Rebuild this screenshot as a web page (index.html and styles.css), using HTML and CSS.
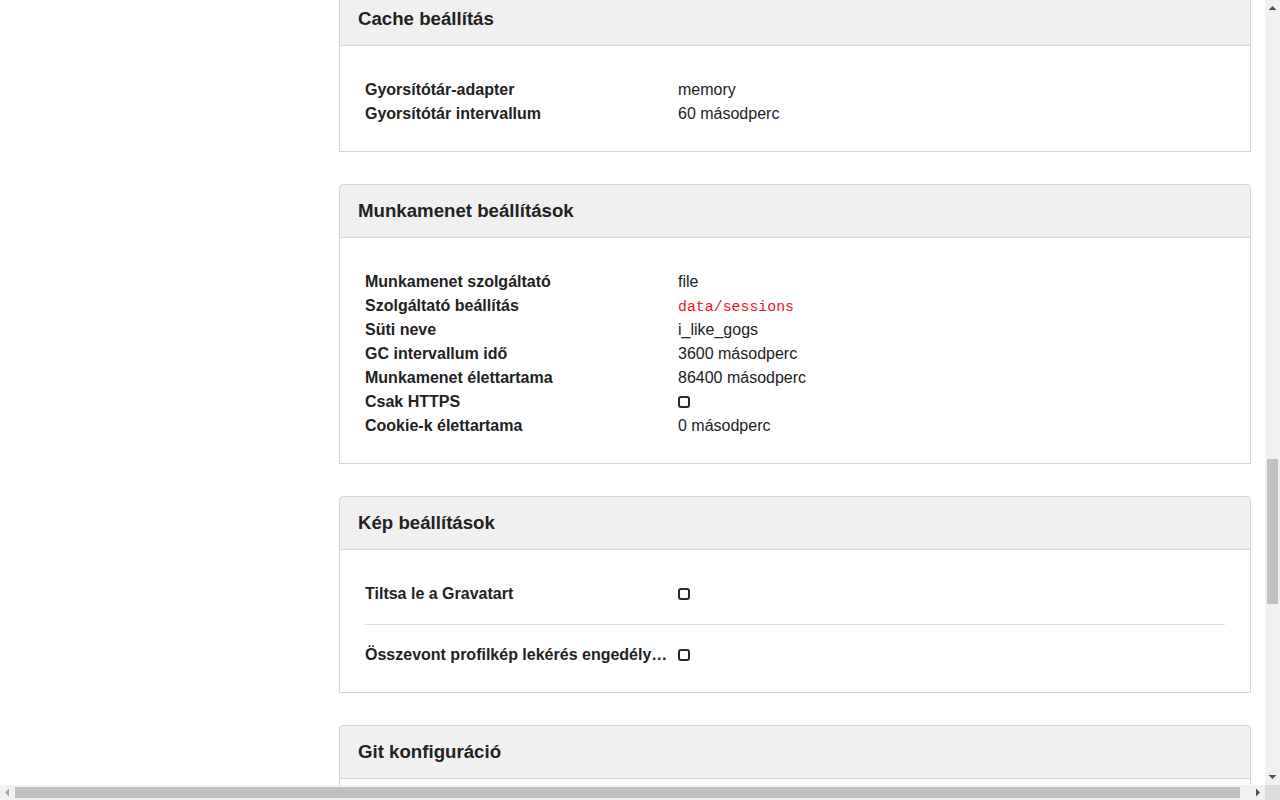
FILE: index.html
```html
<!DOCTYPE html>
<html lang="hu">
<head>
<meta charset="utf-8">
<title>Konfiguráció - Gogs</title>
<link rel="stylesheet" href="styles.css">
</head>
<body>
<div class="window">
<div class="viewport" id="viewport">
<div class="page">
  <header class="topbar">
    <div class="topbar-inner">
      <span class="brand">Gogs</span>
      <a class="top-link" href="#">Irányítópult</a>
      <a class="top-link" href="#">Problémák</a>
      <a class="top-link" href="#">Pull request-ek</a>
      <a class="top-link" href="#">Felfedezés</a>
    </div>
  </header>

  <div class="admin">
    <nav class="side-menu">
      <a class="side-item" href="#">Áttekintés</a>
      <a class="side-item" href="#">Felhasználó-fiókok</a>
      <a class="side-item" href="#">Szervezetek</a>
      <a class="side-item" href="#">Tárolók</a>
      <a class="side-item" href="#">Hitelesítési források</a>
      <a class="side-item active" href="#">Konfiguráció</a>
      <a class="side-item" href="#">Rendszerértesítések</a>
      <a class="side-item" href="#">Felügyelet</a>
    </nav>

    <main class="content">
      <section class="panel">
        <h4 class="panel-head">Szerver konfiguráció</h4>
        <div class="panel-body">
          <dl class="kv">
            <dt>Alkalmazás neve</dt><dd>Gogs</dd>
            <dt>Alkalmazás verziója</dt><dd>0.12.0</dd>
            <dt>Alkalmazás URL</dt><dd>http://localhost:3000/</dd>
            <dt>Domain</dt><dd>localhost</dd>
            <dt>Offline mód</dt><dd><span class="check"></span></dd>
            <dt>Router naplózás kikapcsolása</dt><dd><span class="check"></span></dd>
          </dl>
          <div class="divider"></div>
          <dl class="kv">
            <dt>Futtató felhasználó</dt><dd>git</dd>
            <dt>Futtatási mód</dt><dd>Éles</dd>
          </dl>
          <div class="divider"></div>
          <dl class="kv">
            <dt>Git verzió</dt><dd>2.25.1</dd>
          </dl>
          <div class="divider"></div>
          <dl class="kv">
            <dt>Tároló gyökérkönyvtára</dt><dd>/home/git/gogs-repositories</dd>
            <dt>Statikus fájl gyökér útvonala</dt><dd>/home/git/gogs</dd>
            <dt>Naplófájl gyökér útvonala</dt><dd>/home/git/gogs/log</dd>
            <dt>Fordított hitelesítés felhasználó</dt><dd>X-WEBAUTH-USER</dd>
          </dl>
        </div>
      </section>

      <section class="panel">
        <h4 class="panel-head">SSH konfiguráció</h4>
        <div class="panel-body">
          <dl class="kv">
            <dt>Engedélyezve</dt><dd><span class="check"></span></dd>
          </dl>
          <div class="divider"></div>
          <dl class="kv">
            <dt>Beépített szerver indítása</dt><dd><span class="check"></span></dd>
            <dt>Domain</dt><dd>localhost</dd>
            <dt>Port</dt><dd>22</dd>
            <dt>Figyelő port</dt><dd>22</dd>
            <dt>Gyökér útvonal</dt><dd>/home/git/.ssh</dd>
            <dt>Kulcs generálás útvonala</dt><dd>ssh-keygen</dd>
            <dt>Kulcs teszt útvonala</dt><dd>/tmp</dd>
            <dt>Minimális kulcsméret ellenőrzés</dt><dd><span class="check"></span></dd>
          </dl>
        </div>
      </section>

      <section class="panel">
        <h4 class="panel-head">Tároló konfiguráció</h4>
        <div class="panel-body">
          <dl class="kv">
            <dt>Tároló gyökérkönyvtára</dt><dd>/home/git/gogs-repositories</dd>
            <dt>Szkript típusa</dt><dd>bash</dd>
            <dt>ANSI karakterkészlet</dt><dd>UTF-8</dd>
            <dt>Privát kényszerítése</dt><dd><span class="check"></span></dd>
            <dt>Létrehozási korlát</dt><dd>-1</dd>
          </dl>
        </div>
      </section>

      <section class="panel">
        <h4 class="panel-head">Adatbázis konfiguráció</h4>
        <div class="panel-body">
          <dl class="kv">
            <dt>Típus</dt><dd>sqlite3</dd>
            <dt>Hoszt</dt><dd>127.0.0.1:3306</dd>
            <dt>Név</dt><dd>gogs</dd>
            <dt>Felhasználó</dt><dd>root</dd>
            <dt>SSL mód</dt><dd>disable</dd>
            <dt>Útvonal</dt><dd>data/gogs.db</dd>
          </dl>
        </div>
      </section>

      <section class="panel">
        <h4 class="panel-head">Szolgáltatás konfiguráció</h4>
        <div class="panel-body">
          <dl class="kv">
            <dt>Regisztráció e-mail megerősítése</dt><dd><span class="check"></span></dd>
            <dt>Regisztráció letiltása</dt><dd><span class="check"></span></dd>
            <dt>Regisztrációs gomb megjelenítése</dt><dd><span class="check"></span></dd>
            <dt>Bejelentkezés szükséges a megtekintéshez</dt><dd><span class="check"></span></dd>
            <dt>E-mail értesítések</dt><dd><span class="check"></span></dd>
            <dt>Kulcsméret ellenőrzés letiltása</dt><dd><span class="check"></span></dd>
            <dt>Captcha engedélyezése</dt><dd><span class="check"></span></dd>
            <dt>Aktiváló kód élettartama</dt><dd>180 perc</dd>
          </dl>
          <div class="divider"></div>
          <dl class="kv">
            <dt>Jelszó visszaállító kód élettartama</dt><dd>180 perc</dd>
          </dl>
        </div>
      </section>

      <section class="panel">
        <h4 class="panel-head">Webhook konfiguráció</h4>
        <div class="panel-body">
          <dl class="kv">
            <dt>Várólista hossza</dt><dd>1000</dd>
            <dt>Kézbesítési időkorlát</dt><dd>5 másodperc</dd>
            <dt>TLS ellenőrzés kihagyása</dt><dd><span class="check"></span></dd>
          </dl>
        </div>
      </section>

      <section class="panel">
        <h4 class="panel-head">Levelező konfiguráció</h4>
        <div class="panel-body">
          <dl class="kv">
            <dt>Engedélyezve</dt><dd><span class="check"></span></dd>
          </dl>
        </div>
      </section>

      <section class="panel" id="cache">
        <h4 class="panel-head">Cache beállítás</h4>
        <div class="panel-body">
          <dl class="kv">
            <dt>Gyorsítótár-adapter</dt><dd>memory</dd>
            <dt>Gyorsítótár intervallum</dt><dd>60 másodperc</dd>
          </dl>
        </div>
      </section>

      <section class="panel">
        <h4 class="panel-head">Munkamenet beállítások</h4>
        <div class="panel-body">
          <dl class="kv">
            <dt>Munkamenet szolgáltató</dt><dd>file</dd>
            <dt>Szolgáltató beállítás</dt><dd><code class="code">data/sessions</code></dd>
            <dt>Süti neve</dt><dd>i_like_gogs</dd>
            <dt>GC intervallum idő</dt><dd>3600 másodperc</dd>
            <dt>Munkamenet élettartama</dt><dd>86400 másodperc</dd>
            <dt>Csak HTTPS</dt><dd><span class="check"></span></dd>
            <dt>Cookie-k élettartama</dt><dd>0 másodperc</dd>
          </dl>
        </div>
      </section>

      <section class="panel">
        <h4 class="panel-head">Kép beállítások</h4>
        <div class="panel-body">
          <dl class="kv">
            <dt>Tiltsa le a Gravatart</dt><dd><span class="check"></span></dd>
          </dl>
          <div class="divider"></div>
          <dl class="kv">
            <dt>Összevont profilkép lekérés engedélyezése</dt><dd><span class="check"></span></dd>
          </dl>
        </div>
      </section>

      <section class="panel">
        <h4 class="panel-head">Git konfiguráció</h4>
        <div class="panel-body">
          <dl class="kv">
            <dt>Diff kiemelés kikapcsolása</dt><dd><span class="check"></span></dd>
            <dt>Maximális diff sorok (egy fájlhoz)</dt><dd>1000</dd>
            <dt>Maximális diff karakterek (egy sorhoz)</dt><dd>5000</dd>
            <dt>Maximális diff fájlok (egy diffhez)</dt><dd>100</dd>
            <dt>GC paraméterek</dt><dd><code class="code">[]</code></dd>
          </dl>
          <div class="divider"></div>
          <dl class="kv">
            <dt>Migrálás időkorlátja</dt><dd>600 másodperc</dd>
            <dt>Tükrözés időkorlátja</dt><dd>300 másodperc</dd>
            <dt>Klónozás időkorlátja</dt><dd>300 másodperc</dd>
            <dt>Lehúzás időkorlátja</dt><dd>300 másodperc</dd>
            <dt>GC időkorlátja</dt><dd>60 másodperc</dd>
          </dl>
        </div>
      </section>

      <section class="panel">
        <h4 class="panel-head">Napló konfiguráció</h4>
        <div class="panel-body">
          <dl class="kv">
            <dt>Mód</dt><dd>console</dd>
            <dt>Puffer mérete</dt><dd>100</dd>
            <dt>Szint</dt><dd>Trace</dd>
            <dt>Gyökér útvonal</dt><dd>/home/git/gogs/log</dd>
          </dl>
          <div class="divider"></div>
          <dl class="kv">
            <dt>Mód</dt><dd>file</dd>
            <dt>Puffer mérete</dt><dd>100</dd>
            <dt>Szint</dt><dd>Info</dd>
            <dt>Fájlnév</dt><dd>gogs.log</dd>
          </dl>
        </div>
      </section>
    </main>
  </div>

  <footer class="footer">
    <div class="footer-inner">
      <span>© 2020 Gogs Verzió: 0.12.0 Oldal: 2ms Sablon: 1ms</span>
      <span>Magyar</span>
    </div>
  </footer>
</div>
</div>

<div class="vbar" aria-hidden="true">
  <div class="sb-btn">
    <svg width="15" height="15" viewBox="0 0 15 15"><polygon points="3.5,10 11.5,10 7.5,6" fill="#505050"/></svg>
  </div>
  <div class="sb-track">
    <div class="sb-thumb" id="vthumb" style="margin-top: 444px; height: 146px;"></div>
  </div>
  <div class="sb-btn">
    <svg width="15" height="15" viewBox="0 0 15 15"><polygon points="3.5,5 11.5,5 7.5,9" fill="#505050"/></svg>
  </div>
</div>

<div class="hbar" aria-hidden="true">
  <div class="sb-btn">
    <svg width="15" height="15" viewBox="0 0 15 15"><polygon points="9,3.5 9,11.5 5,7.5" fill="#a3a3a3"/></svg>
  </div>
  <div class="sb-track">
    <div class="sb-thumb" id="hthumb" style="margin-left: 0px; width: 1225px;"></div>
  </div>
  <div class="sb-btn">
    <svg width="15" height="15" viewBox="0 0 15 15"><polygon points="6,3.5 6,11.5 10,7.5" fill="#505050"/></svg>
  </div>
</div>

<div class="sb-corner" aria-hidden="true"></div>
</div>
<script src="script.js"></script>
</body>
</html>
```

FILE: styles.css
```css
html,
body {
  margin: 0;
  height: 100%;
  overflow: hidden;
}

body {
  background: #ffffff;
  color: #222222;
  font-family: "Liberation Sans", Arial, sans-serif;
  font-size: 16px;
  line-height: 24px;
}

.window {
  display: grid;
  grid-template-columns: 1fr 15px;
  grid-template-rows: 1fr 15px;
  width: 100vw;
  height: 100vh;
}

.viewport {
  overflow: hidden;
  min-width: 0;
  min-height: 0;
}

/* window scrollbars */
.vbar {
  display: flex;
  flex-direction: column;
  background: #f1f1f1;
  min-height: 0;
}

.hbar {
  display: flex;
  flex-direction: row;
  background: #f1f1f1;
  min-width: 0;
}

.sb-btn {
  flex: 0 0 15px;
  width: 15px;
  height: 15px;
}

.sb-btn svg {
  display: block;
}

.vbar .sb-track {
  flex: 1 1 auto;
  min-height: 0;
  padding: 0 2px;
}

.hbar .sb-track {
  flex: 1 1 auto;
  min-width: 0;
  padding: 2px 0;
  display: flex;
}

.vbar .sb-thumb {
  background: #c1c1c1;
}

.hbar .sb-thumb {
  flex: 0 0 auto;
  height: 11px;
  background: #c1c1c1;
}

.sb-corner {
  background: #dcdcdc;
}

.page {
  min-width: 1275px;
}

.topbar {
  height: 60px;
  border-bottom: 1px solid #dddddd;
  background: #ffffff;
}

.topbar-inner {
  display: flex;
  align-items: center;
  gap: 24px;
  height: 60px;
  padding: 0 35px;
}

.brand {
  font-weight: bold;
  font-size: 20px;
}

.top-link {
  color: #333333;
  text-decoration: none;
}

.admin {
  display: flex;
  gap: 14px;
  padding: 30px 0 0 35px;
}

.side-menu {
  box-sizing: border-box;
  flex: 0 0 290px;
  display: flex;
  flex-direction: column;
  align-self: flex-start;
  border: 1px solid #d4d4d5;
  border-radius: 4px;
}

.side-item {
  padding: 13px 16px;
  color: #333333;
  text-decoration: none;
  border-top: 1px solid #e6e6e6;
}

.side-item:first-child {
  border-top: none;
}

.side-item.active {
  background: #f0f0f0;
  font-weight: bold;
}

.content {
  box-sizing: border-box;
  flex: 0 0 912px;
  width: 912px;
  padding-bottom: 151px;
}

.panel + .panel {
  margin-top: 32px;
}

.panel-head {
  margin: 0;
  padding: 13px 18px;
  font-size: 18.67px;
  line-height: 26px;
  font-weight: bold;
  color: #222222;
  background: #f0f0f0;
  border: 1px solid #d4d4d5;
  border-radius: 4px 4px 0 0;
}

.panel-body {
  padding: 31.5px 25px 25.5px;
  border: 1px solid #d4d4d5;
  border-top: none;
}

.kv {
  display: grid;
  grid-template-columns: 307px 1fr;
  grid-auto-rows: 24px;
  column-gap: 6px;
  margin: 0;
}

.kv dt {
  font-weight: bold;
  white-space: nowrap;
  overflow: hidden;
  text-overflow: ellipsis;
}

.kv dd {
  margin: 0;
  white-space: nowrap;
}

.divider {
  margin: 18px 0;
  border-top: 1px solid #dedede;
}

.code {
  font-family: "Liberation Mono", "Courier New", monospace;
  font-size: 14.88px;
  line-height: 1;
  color: #e8161c;
}

.check {
  display: inline-block;
  box-sizing: border-box;
  width: 12px;
  height: 12px;
  border: 2px solid #2a2a2a;
  border-radius: 3px;
  vertical-align: -1px;
}

.footer {
  border-top: 1px solid #dddddd;
  background: #fafafa;
}

.footer-inner {
  display: flex;
  justify-content: space-between;
  padding: 8px 35px;
  font-size: 14px;
  color: #555555;
}
```

FILE: script.js
```js
(function () {
  function place() {
    var vp = document.getElementById('viewport');
    var card = document.getElementById('cache');
    if (!vp || !card) return;
    var offset = card.getBoundingClientRect().top - vp.getBoundingClientRect().top + vp.scrollTop;
    vp.scrollTop = Math.round(offset + 8);
    vp.scrollLeft = 0;

    var vthumb = document.getElementById('vthumb');
    var hthumb = document.getElementById('hthumb');

    var vTrack = vthumb.parentNode.clientHeight;
    var vMax = vp.scrollHeight - vp.clientHeight;
    if (vMax > 0) {
      var vLen = Math.max(20, Math.round(vTrack * vp.clientHeight / vp.scrollHeight));
      var vPos = Math.round((vTrack - vLen) * vp.scrollTop / vMax);
      vthumb.style.height = vLen + 'px';
      vthumb.style.marginTop = vPos + 'px';
    }

    var hTrack = hthumb.parentNode.clientWidth;
    var hMax = vp.scrollWidth - vp.clientWidth;
    if (hMax > 0) {
      var hLen = Math.max(20, Math.round(hTrack * vp.clientWidth / vp.scrollWidth));
      var hPos = Math.round((hTrack - hLen) * vp.scrollLeft / hMax);
      hthumb.style.width = hLen + 'px';
      hthumb.style.marginLeft = hPos + 'px';
    }
  }
  place();
  window.addEventListener('load', place);
})();
```
